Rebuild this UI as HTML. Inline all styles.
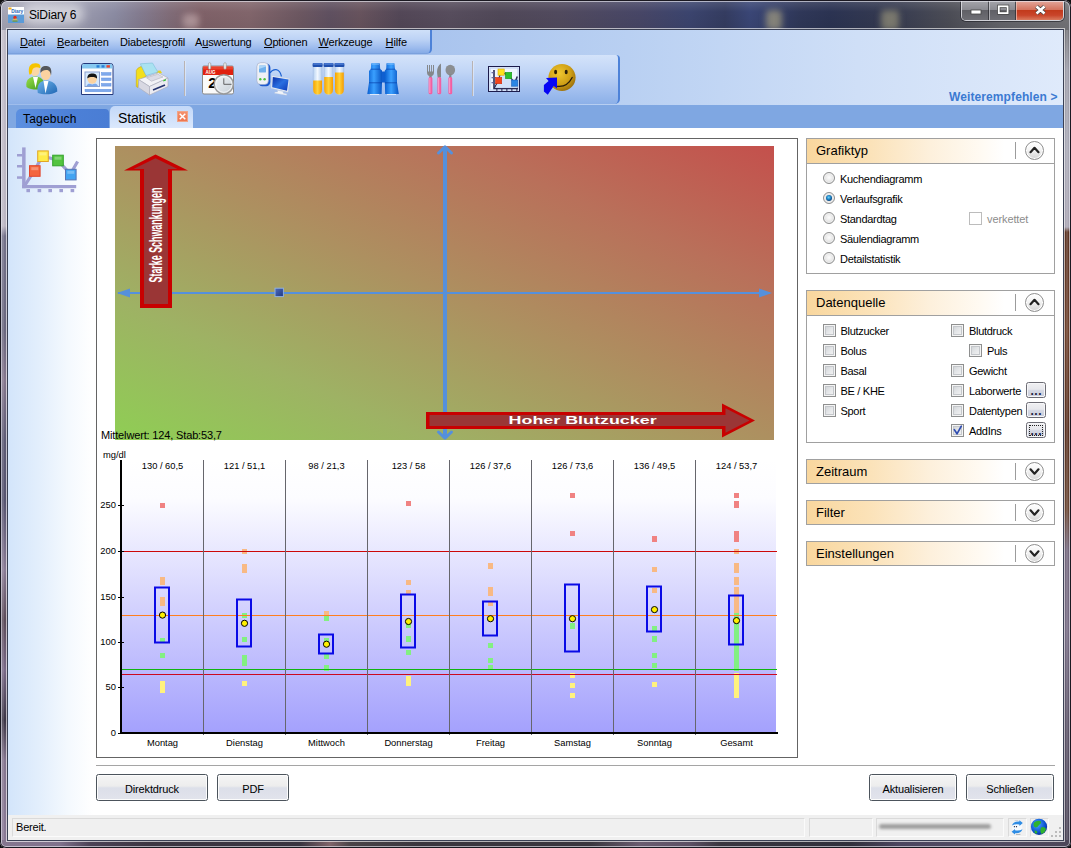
<!DOCTYPE html>
<html><head><meta charset="utf-8"><title>SiDiary 6</title>
<style>
html,body{margin:0;padding:0}
body{width:1071px;height:848px;position:relative;overflow:hidden;background:#111;font-family:"Liberation Sans",sans-serif;font-size:11px;color:#000;line-height:1}
div,span,u{position:absolute;box-sizing:border-box;white-space:nowrap}
u{position:static;text-decoration:underline}
svg{position:absolute;left:0;top:0;overflow:visible}
#win{left:0;top:0;width:1071px;height:848px;border-radius:7px 7px 6px 6px;overflow:hidden;background:#6c6078}
#title{left:0;top:0;width:1071px;height:30px;
 background:
 linear-gradient(to bottom,rgba(255,255,255,.16) 0,rgba(255,255,255,.10) 3px,rgba(255,255,255,0) 12px,rgba(0,0,0,.05) 28px),
 linear-gradient(to right,#a4a4b4 0,#a8a8b9 40px,#9a9aae 85px,#8b8ba2 115px,#837b8f 140px,#806c78 170px,#7f6168 200px,#81656b 250px,#6c5761 300px,#5f5060 330px,#67535d 360px,#534757 400px,#574d5d 450px,#504858 500px,#514a5e 560px,#474666 640px,#3b446e 690px,#343c60 725px,#3a4676 750px,#2f3758 800px,#2b3352 830px,#353a50 890px,#4c4d56 950px,#64646a 1000px,#747478 1071px)}
#tglow{left:22px;top:4px;width:62px;height:20px;border-radius:10px;background:rgba(255,255,255,.5);filter:blur(5px)}
#title i{position:absolute;display:block;filter:blur(3px);border-radius:4px}
#ttext{left:29px;top:9px;font-size:12px;color:#000;letter-spacing:-.15px}
#ticon{left:8px;top:7px;width:16px;height:16px;background:linear-gradient(#fff 0,#fff 45%,#5b9bd8 45%,#4a88c8 100%)}
.fl{left:0;top:30px;width:8px;height:810px;
 background:linear-gradient(to bottom,#c0bcc8 0,#bbb6c3 196px,#74728a 206px,#6a6880 300px,#86788e 350px,#5e5c76 410px,#565470 470px,#8a7c96 540px,#5c4c5a 590px,#7a6a88 640px,#3c3646 690px,#85768f 730px,#8a7a96 810px)}
.fr{left:1063px;top:30px;width:8px;height:810px;
 background:linear-gradient(to bottom,#77777c 0,#9c9ca8 40px,#a9a9b6 120px,#aaa6b4 197px,#5c3424 202px,#6e402c 300px,#5a3222 400px,#6a4634 480px,#74687e 520px,#766c84 600px,#5c5468 700px,#4c4658 810px)}
.fb{left:0;top:840px;width:1071px;height:8px;
 background:linear-gradient(to right,#85768f 0,#80728c 60px,#4c4256 90px,#3c3642 150px,#3a3440 300px,#80646a 330px,#4a4448 350px,#3a363e 420px,#3a363e 590px,#6a5c70 640px,#5c5064 690px,#3a3640 720px,#30303c 850px,#4c4660 900px,#524c62 1000px,#4c4658 1071px)}
.fhl{left:2px;top:30px;width:2px;height:810px;background:rgba(255,255,255,.14)}
#edge{left:0;top:0;width:1071px;height:848px;border-radius:7px 7px 6px 6px;box-shadow:inset 0 0 0 1px rgba(18,16,24,.95),inset 0 0 0 2px rgba(236,236,244,.62)}
#inl{left:6px;top:28px;width:1059px;height:814px;border:1px solid rgba(255,255,255,.62)}
#ind{left:7px;top:29px;width:1057px;height:812px;border:1px solid #3a4054}
/* caption buttons */
#capb{left:961px;top:1px;width:103px;height:20px;border:1px solid rgba(230,230,236,.85);border-top:none;border-radius:0 0 5px 5px;overflow:hidden;box-shadow:0 0 0 1px rgba(30,30,36,.6)}
#capb div{top:0;height:19px}
.cmin{left:0;width:27px;background:linear-gradient(#a4a4aa 0,#8b8b92 45%,#606066 50%,#6e6e74 100%);border-right:1px solid rgba(40,40,46,.7)}
.cmax{left:27px;width:27px;background:linear-gradient(#a4a4aa 0,#8b8b92 45%,#606066 50%,#6e6e74 100%);border-left:1px solid rgba(220,220,226,.6);border-right:1px solid rgba(40,40,46,.7)}
.ccls{left:54px;width:47px;background:linear-gradient(#e3a79b 0,#d4745f 45%,#c23a1c 50%,#c9452a 75%,#d97a5e 100%);border-left:1px solid rgba(240,200,190,.7)}
/* client */
#client{left:8px;top:29px;width:1055px;height:811px;background:#fff;overflow:hidden}
#ctop{left:0;top:0;width:1055px;height:1px;background:#3a4054}
#bars{left:0;top:1px;width:1055px;height:75px;background:linear-gradient(to right,#9fbdec 0,#a9c4ee 420px,#b9d0f2 620px,#cfdff7 850px,#dfeafb 1055px)}
#menu{left:0;top:1px;width:424px;height:24px;border-right:2px solid #4d82d8;border-bottom:1px solid #7ba1dd;border-radius:0 0 5px 0;background:linear-gradient(#cfe0f9 0,#bdd3f5 40%,#9fbdee 75%,#86abe6 100%)}
#menu span{top:7px;font-size:11px;letter-spacing:-.15px}
#tool{left:0;top:26px;width:612px;height:49px;border-right:2px solid #4d82d8;border-radius:0 4px 5px 0;background:linear-gradient(#d4e3fa 0,#c0d5f6 35%,#a3c0ef 70%,#8cb0e8 100%)}
.tsep{top:6px;width:2px;height:35px;background:linear-gradient(to right,#b9b3b3 0,#b9b3b3 1px,rgba(225,235,250,.7) 1px)}
#tabs{left:0;top:76px;width:1055px;height:23px;background:#7fa7e2}
#tab1{left:8px;top:4px;width:93px;height:19px;border-radius:5px 4px 0 0;background:linear-gradient(to right,#5b8fe0 0,#4c80d7 60%,#4a7dd4 100%)}
#tab2{left:102px;top:1px;width:83px;height:22px;border-radius:5px 5px 0 0;background:linear-gradient(#c3d8f8 0,#cfe0fa 50%,#dbe8fc 100%)}
#tab1 span{left:7px;top:4px;font-size:12px;letter-spacing:.2px}
#tab2 span{left:8px;top:5px;font-size:14px;letter-spacing:-.15px}
#tabx{left:67px;top:5px;width:11px;height:11px;background:linear-gradient(#f4906c,#ee7650);border:1px solid #f0a488}
#main{left:0;top:99px;width:1055px;height:687px;background:linear-gradient(to right,#d3e5fb 0,#e2eefc 30px,#f4f9fe 60px,#fff 85px)}
#status{left:0;top:786px;width:1055px;height:25px;background:#f0f0f0}
.sp{top:3px;height:19px;border:1px solid #dadada;border-right-color:#fbfbfb;border-bottom-color:#fbfbfb;background:#f0f0f0}
/* chart panel */
#panel{left:88px;top:109px;width:702px;height:620px;border:1px solid #646464;background:#fff}
#plot{left:107px;top:117px;width:659px;height:294px;background:linear-gradient(to top right,#8fce54 0%,#9eb264 24%,#ad9060 50%,#b9705a 76%,#c4504c 100%)}
#mw{left:93px;top:401px;font-size:11px;letter-spacing:-.15px}
/* right panels */
.gp{left:798px;width:249px;border:1px solid #a0a0a0;background:#fff}
.gh{left:0;top:0;width:247px;height:25px;background:linear-gradient(to right,#f9d79e 0,#fbe2b8 25%,#fdf0dc 50%,#fffaf2 70%,#fff 80%)}
.gh.open{border-bottom:1px solid #a0a0a0}
.gh.cl{height:23px}
.gh span{left:9px;top:5px;font-size:13px}
.gsep{left:208px;top:3px;width:1px;height:17px;background:#9c9c9c}
.gbtn{left:218px;top:2px;width:19px;height:19px;border-radius:50%;border:1px solid #8f8f8f;background:linear-gradient(#fff 0,#f4f4f4 45%,#d2d2d2 100%);box-shadow:inset 0 0 0 1px #fff}
.rad{width:12px;height:12px;border-radius:50%;border:1px solid #8e8f8f;background:radial-gradient(circle at 50% 45%,#fdfdfd 0,#e6e6e6 55%,#c9c9c9 100%);box-shadow:inset 0 0 0 1px #f2f2f2}
.rad.on:after{content:"";position:absolute;left:2px;top:2px;width:6px;height:6px;border-radius:50%;background:radial-gradient(circle at 45% 40%,#74d2f4 0,#2590d0 35%,#0b4a86 68%,#072e5c 100%)}
.chk{width:13px;height:13px;border:1px solid #8e8f8f;background:linear-gradient(135deg,#c9ccd0 0,#e4e6e8 50%,#f6f6f6 100%);box-shadow:inset 0 0 0 1px #f4f4f4, inset 0 0 0 2px #c4c7cb}
.chk.dis{border-color:#bcbcbc;background:#fff;box-shadow:none}
.lb{font-size:11px;letter-spacing:-.3px}
.lb.dis{color:#8c8c8c}
.sb{width:20px;height:16px;border:1px solid #6c6c74;border-radius:2.5px;background:linear-gradient(#f0f0f2 0,#e6e7ec 45%,#d6d9e4 52%,#c6cbda 100%);box-shadow:inset 0 0 0 1px #f6f6f8}
.sb span{left:3.5px;top:2px;font-size:12px;letter-spacing:.5px;font-weight:bold;color:#1c1c3c}
.sb i{position:absolute;left:2px;top:2px;right:2px;bottom:1px;border:1px dotted #222}
/* buttons */
.btn{top:745px;height:27px;border:1px solid #4c545c;border-radius:2.5px;letter-spacing:-.15px;background:linear-gradient(#f5f5f5 0,#ededed 44%,#dcdfe9 52%,#e2e4ec 100%);box-shadow:inset 0 0 0 1px #fcfcfc;text-align:center;font-size:11px;line-height:28px}
#smear{left:871px;top:9px;width:112px;height:5px;border-radius:3px;background:#8f8f8f;filter:blur(1.6px);opacity:.85}
#hr{left:88px;top:736px;width:959px;height:1px;background:#a5a5a5}
</style></head><body>
<div id="win">
<div id="title"><i style="left:766px;top:10px;width:16px;height:20px;background:rgba(196,186,136,.55)"></i><i style="left:881px;top:10px;width:18px;height:20px;background:rgba(190,182,140,.5)"></i><i style="left:183px;top:14px;width:16px;height:14px;background:rgba(225,200,200,.45)"></i><div id="tglow"></div><div id="ttext">SiDiary 6</div>
<div id="capb"><div class="cmin"></div><div class="cmax"></div><div class="ccls"></div></div>
</div>
<div class="fl"></div><div class="fr"></div><div class="fb"></div><div class="fhl"></div><div class="fhl" style="left:1066px"></div><div id="inl"></div><div id="ind"></div>
<div id="client">
<div id="ctop"></div><div id="bars"></div>
<div id="menu"><span style="left:12.0px"><u>D</u>atei</span><span style="left:49.0px"><u>B</u>earbeiten</span><span style="left:112px">Diabetes<u>p</u>rofil</span><span style="left:187px">A<u>u</u>swertung</span><span style="left:256.0px"><u>O</u>ptionen</span><span style="left:310.4px"><u>W</u>erkzeuge</span><span style="left:377.6px"><u>H</u>ilfe</span></div>
<div id="tool"><div class="tsep" style="left:176px"></div><div class="tsep" style="left:464px"></div></div>
<div id="wlink" style="left:941px;top:62px;font-size:12px;font-weight:bold;color:#3b7ad2;letter-spacing:.1px">Weiterempfehlen &gt;</div>
<div id="tabs"><div id="tab1"><span>Tagebuch</span></div><div id="tab2"><span>Statistik</span><div id="tabx"></div></div></div>
<div id="main"></div>
<div id="panel"></div><div id="plot"></div><div id="mw">Mittelwert: 124, Stab:53,7</div>
<div class="gp" style="top:109px;height:136px"><div class="gh open"><span>Grafiktyp</span><div class="gsep"></div><div class="gbtn"></div></div><div class="rad" style="left:16px;top:33px"></div><span class="lb" style="left:33px;top:35px">Kuchendiagramm</span><div class="rad on" style="left:16px;top:53px"></div><span class="lb" style="left:33px;top:55px">Verlaufsgrafik</span><div class="rad" style="left:16px;top:73px"></div><span class="lb" style="left:33px;top:75px">Standardtag</span><div class="rad" style="left:16px;top:93px"></div><span class="lb" style="left:33px;top:95px">Säulendiagramm</span><div class="rad" style="left:16px;top:113px"></div><span class="lb" style="left:33px;top:115px">Detailstatistik</span><div class="chk dis" style="left:162px;top:73px"></div><span class="lb dis" style="left:180px;top:75px;letter-spacing:-.1px">verkettet</span></div>
<div class="gp" style="top:261px;height:153px"><div class="gh open"><span>Datenquelle</span><div class="gsep"></div><div class="gbtn"></div></div><div class="chk" style="left:16px;top:33px"></div><span class="lb" style="left:33.5px;top:35px">Blutzucker</span><div class="chk" style="left:16px;top:53px"></div><span class="lb" style="left:33.5px;top:55px">Bolus</span><div class="chk" style="left:16px;top:73px"></div><span class="lb" style="left:33.5px;top:75px">Basal</span><div class="chk" style="left:16px;top:93px"></div><span class="lb" style="left:33.5px;top:95px">BE / KHE</span><div class="chk" style="left:16px;top:113px"></div><span class="lb" style="left:33.5px;top:115px">Sport</span><div class="chk" style="left:144px;top:33px"></div><span class="lb" style="left:162px;top:35px">Blutdruck</span><div class="chk" style="left:162px;top:53px"></div><span class="lb" style="left:180px;top:55px">Puls</span><div class="chk" style="left:144px;top:73px"></div><span class="lb" style="left:162px;top:75px">Gewicht</span><div class="chk" style="left:144px;top:93px"></div><span class="lb" style="left:162px;top:95px">Laborwerte</span><div class="sb" style="left:219px;top:91px"><span>...</span></div><div class="chk" style="left:144px;top:113px"></div><span class="lb" style="left:162px;top:115px">Datentypen</span><div class="sb" style="left:219px;top:111px"><span>...</span></div><div class="chk" style="left:144px;top:133px"></div><span class="lb" style="left:162px;top:135px">AddIns</span><div class="sb" style="left:219px;top:131px"><span>...</span><i></i></div></div>
<div class="gp" style="top:430px;height:25px"><div class="gh cl"><span>Zeitraum</span><div class="gsep"></div><div class="gbtn"></div></div></div>
<div class="gp" style="top:471px;height:25px"><div class="gh cl"><span>Filter</span><div class="gsep"></div><div class="gbtn"></div></div></div>
<div class="gp" style="top:512px;height:25px"><div class="gh cl"><span>Einstellungen</span><div class="gsep"></div><div class="gbtn"></div></div></div>
<div id="hr"></div>
<div class="btn" style="left:88px;width:112px">Direktdruck</div><div class="btn" style="left:209px;width:72px">PDF</div><div class="btn" style="left:861px;width:88px">Aktualisieren</div><div class="btn" style="left:958px;width:88px">Schließen</div>
<div id="status"><div class="sp" style="left:4px;width:793px"></div><div class="sp" style="left:801px;width:64px"></div><div class="sp" style="left:868px;width:128px"></div><div class="sp" style="left:1000px;width:19px"></div><div class="sp" style="left:1022px;width:19px"></div><span style="left:8px;top:7px;font-size:11px;letter-spacing:-.2px">Bereit.</span><div id="smear"></div></div>
</div>
<svg width="1071" height="848" viewBox="0 0 1071 848" font-family="Liberation Sans, sans-serif">
<defs><linearGradient id="bg" x1="0" y1="0" x2="0" y2="1"><stop offset="0" stop-color="#fff"/><stop offset=".14" stop-color="#fcfcff"/><stop offset="1" stop-color="#a4a1fd"/></linearGradient><linearGradient id="mk" x1="0" y1="0" x2="1" y2="1"><stop offset="0" stop-color="#4c6cc0"/><stop offset="1" stop-color="#203880"/></linearGradient></defs>
<rect x="122" y="460" width="654" height="272" fill="url(#bg)" shape-rendering="crispEdges"/>
<rect x="160" y="502.5" width="5" height="5.0" fill="#f08282" shape-rendering="crispEdges"/>
<rect x="160" y="577.0" width="5" height="7.5" fill="#f8b984" shape-rendering="crispEdges"/>
<rect x="160" y="597.0" width="5" height="9.0" fill="#f8b984" shape-rendering="crispEdges"/>
<rect x="160" y="638.0" width="5" height="5.0" fill="#82f082" shape-rendering="crispEdges"/>
<rect x="160" y="653.0" width="5" height="5.0" fill="#82f082" shape-rendering="crispEdges"/>
<rect x="160" y="681.0" width="5" height="11.5" fill="#fff27e" shape-rendering="crispEdges"/>
<rect x="242" y="549.0" width="5" height="5.0" fill="#f8b984" shape-rendering="crispEdges"/>
<rect x="242" y="564.0" width="5" height="9.0" fill="#f8b984" shape-rendering="crispEdges"/>
<rect x="242" y="613.0" width="5" height="5.0" fill="#82f082" shape-rendering="crispEdges"/>
<rect x="242" y="637.0" width="5" height="5.0" fill="#82f082" shape-rendering="crispEdges"/>
<rect x="242" y="655.0" width="5" height="11.0" fill="#82f082" shape-rendering="crispEdges"/>
<rect x="242" y="681.0" width="5" height="5.0" fill="#fff27e" shape-rendering="crispEdges"/>
<rect x="324" y="611.0" width="5" height="4.0" fill="#f8b984" shape-rendering="crispEdges"/>
<rect x="324" y="615.0" width="5" height="6.0" fill="#82f082" shape-rendering="crispEdges"/>
<rect x="324" y="638.0" width="5" height="8.0" fill="#82f082" shape-rendering="crispEdges"/>
<rect x="324" y="654.0" width="5" height="5.0" fill="#82f082" shape-rendering="crispEdges"/>
<rect x="324" y="665.0" width="5" height="6.0" fill="#82f082" shape-rendering="crispEdges"/>
<rect x="406" y="500.5" width="5" height="5.0" fill="#f08282" shape-rendering="crispEdges"/>
<rect x="406" y="580.0" width="5" height="4.5" fill="#f8b984" shape-rendering="crispEdges"/>
<rect x="406" y="590.0" width="5" height="4.0" fill="#f8b984" shape-rendering="crispEdges"/>
<rect x="406" y="623.0" width="5" height="5.0" fill="#82f082" shape-rendering="crispEdges"/>
<rect x="406" y="635.5" width="5" height="6.5" fill="#82f082" shape-rendering="crispEdges"/>
<rect x="406" y="650.0" width="5" height="4.5" fill="#82f082" shape-rendering="crispEdges"/>
<rect x="406" y="675.5" width="5" height="10.5" fill="#fff27e" shape-rendering="crispEdges"/>
<rect x="488" y="563.0" width="5" height="6.0" fill="#f8b984" shape-rendering="crispEdges"/>
<rect x="488" y="587.0" width="5" height="9.0" fill="#f8b984" shape-rendering="crispEdges"/>
<rect x="488" y="602.0" width="5" height="4.0" fill="#f8b984" shape-rendering="crispEdges"/>
<rect x="488" y="643.0" width="5" height="4.5" fill="#82f082" shape-rendering="crispEdges"/>
<rect x="488" y="658.0" width="5" height="4.5" fill="#82f082" shape-rendering="crispEdges"/>
<rect x="488" y="665.0" width="5" height="5.0" fill="#82f082" shape-rendering="crispEdges"/>
<rect x="570" y="493.0" width="5" height="5.0" fill="#f08282" shape-rendering="crispEdges"/>
<rect x="570" y="531.0" width="5" height="5.0" fill="#f08282" shape-rendering="crispEdges"/>
<rect x="570" y="623.0" width="5" height="6.0" fill="#82f082" shape-rendering="crispEdges"/>
<rect x="570" y="673.0" width="5" height="5.0" fill="#fff27e" shape-rendering="crispEdges"/>
<rect x="570" y="683.0" width="5" height="5.0" fill="#fff27e" shape-rendering="crispEdges"/>
<rect x="570" y="693.0" width="5" height="5.0" fill="#fff27e" shape-rendering="crispEdges"/>
<rect x="652" y="536.0" width="5" height="6.0" fill="#f08282" shape-rendering="crispEdges"/>
<rect x="652" y="567.0" width="5" height="5.0" fill="#f8b984" shape-rendering="crispEdges"/>
<rect x="652" y="588.0" width="5" height="5.0" fill="#f8b984" shape-rendering="crispEdges"/>
<rect x="652" y="626.0" width="5" height="5.0" fill="#82f082" shape-rendering="crispEdges"/>
<rect x="652" y="636.0" width="5" height="6.0" fill="#82f082" shape-rendering="crispEdges"/>
<rect x="652" y="653.0" width="5" height="5.0" fill="#82f082" shape-rendering="crispEdges"/>
<rect x="652" y="662.5" width="5" height="5.0" fill="#82f082" shape-rendering="crispEdges"/>
<rect x="652" y="682.0" width="5" height="5.0" fill="#fff27e" shape-rendering="crispEdges"/>
<rect x="734" y="493.0" width="5" height="5.0" fill="#f08282" shape-rendering="crispEdges"/>
<rect x="734" y="501.0" width="5" height="6.5" fill="#f08282" shape-rendering="crispEdges"/>
<rect x="734" y="531.0" width="5" height="11.0" fill="#f08282" shape-rendering="crispEdges"/>
<rect x="734" y="549.0" width="5" height="5.0" fill="#f8b984" shape-rendering="crispEdges"/>
<rect x="734" y="563.0" width="5" height="9.5" fill="#f8b984" shape-rendering="crispEdges"/>
<rect x="734" y="577.0" width="5" height="8.0" fill="#f8b984" shape-rendering="crispEdges"/>
<rect x="734" y="587.0" width="5" height="25.5" fill="#f8b984" shape-rendering="crispEdges"/>
<rect x="734" y="612.5" width="5" height="58.5" fill="#82f082" shape-rendering="crispEdges"/>
<rect x="734" y="672.5" width="5" height="25.5" fill="#fff27e" shape-rendering="crispEdges"/>
<rect x="122" y="551" width="655" height="1" fill="#cc0808" shape-rendering="crispEdges"/>
<rect x="122" y="615" width="655" height="1" fill="#ff7f1e" shape-rendering="crispEdges"/>
<rect x="122" y="669" width="655" height="1" fill="#10b410" shape-rendering="crispEdges"/>
<rect x="122" y="674" width="655" height="1" fill="#cc0820" shape-rendering="crispEdges"/>
<rect x="203" y="460" width="1" height="275" fill="#66666c" shape-rendering="crispEdges"/>
<rect x="285" y="460" width="1" height="275" fill="#66666c" shape-rendering="crispEdges"/>
<rect x="367" y="460" width="1" height="275" fill="#66666c" shape-rendering="crispEdges"/>
<rect x="449" y="460" width="1" height="275" fill="#66666c" shape-rendering="crispEdges"/>
<rect x="531" y="460" width="1" height="275" fill="#66666c" shape-rendering="crispEdges"/>
<rect x="613" y="460" width="1" height="275" fill="#66666c" shape-rendering="crispEdges"/>
<rect x="695" y="460" width="1" height="275" fill="#66666c" shape-rendering="crispEdges"/>
<rect x="120" y="460" width="2" height="274" fill="#000" shape-rendering="crispEdges"/>
<rect x="120" y="732" width="658" height="2" fill="#000" shape-rendering="crispEdges"/>
<rect x="118" y="733" width="6" height="1" fill="#000" shape-rendering="crispEdges"/>
<text x="116" y="736" font-size="9.4" text-anchor="end">0</text>
<rect x="118" y="687" width="6" height="1" fill="#000" shape-rendering="crispEdges"/>
<text x="116" y="690" font-size="9.4" text-anchor="end">50</text>
<rect x="118" y="642" width="6" height="1" fill="#000" shape-rendering="crispEdges"/>
<text x="116" y="645" font-size="9.4" text-anchor="end">100</text>
<rect x="118" y="597" width="6" height="1" fill="#000" shape-rendering="crispEdges"/>
<text x="116" y="600" font-size="9.4" text-anchor="end">150</text>
<rect x="118" y="551" width="6" height="1" fill="#000" shape-rendering="crispEdges"/>
<text x="116" y="554" font-size="9.4" text-anchor="end">200</text>
<rect x="118" y="505" width="6" height="1" fill="#000" shape-rendering="crispEdges"/>
<text x="116" y="508" font-size="9.4" text-anchor="end">250</text>
<text x="103" y="457.6" font-size="9.33">mg/dl</text>
<rect x="155" y="587.5" width="14" height="55.0" fill="none" stroke="#0a0ae6" stroke-width="2"/>
<circle cx="162.5" cy="615.1" r="3.1" fill="#fff000" stroke="#000" stroke-width="1"/>
<text x="162.5" y="469" font-size="9.33" text-anchor="middle">130 / 60,5</text>
<text x="162.5" y="746" font-size="9.33" text-anchor="middle">Montag</text>
<rect x="237" y="599.5" width="14" height="47.0" fill="none" stroke="#0a0ae6" stroke-width="2"/>
<circle cx="244.5" cy="623.3" r="3.1" fill="#fff000" stroke="#000" stroke-width="1"/>
<text x="244.5" y="469" font-size="9.33" text-anchor="middle">121 / 51,1</text>
<text x="244.5" y="746" font-size="9.33" text-anchor="middle">Dienstag</text>
<rect x="319" y="634.5" width="14" height="19.0" fill="none" stroke="#0a0ae6" stroke-width="2"/>
<circle cx="326.5" cy="644.2" r="3.1" fill="#fff000" stroke="#000" stroke-width="1"/>
<text x="326.5" y="469" font-size="9.33" text-anchor="middle">98 / 21,3</text>
<text x="326.5" y="746" font-size="9.33" text-anchor="middle">Mittwoch</text>
<rect x="401" y="594.5" width="14" height="53.0" fill="none" stroke="#0a0ae6" stroke-width="2"/>
<circle cx="408.5" cy="621.5" r="3.1" fill="#fff000" stroke="#000" stroke-width="1"/>
<text x="408.5" y="469" font-size="9.33" text-anchor="middle">123 / 58</text>
<text x="408.5" y="746" font-size="9.33" text-anchor="middle">Donnerstag</text>
<rect x="483" y="601.5" width="14" height="34.0" fill="none" stroke="#0a0ae6" stroke-width="2"/>
<circle cx="490.5" cy="618.7" r="3.1" fill="#fff000" stroke="#000" stroke-width="1"/>
<text x="490.5" y="469" font-size="9.33" text-anchor="middle">126 / 37,6</text>
<text x="490.5" y="746" font-size="9.33" text-anchor="middle">Freitag</text>
<rect x="565" y="584.5" width="14" height="67.0" fill="none" stroke="#0a0ae6" stroke-width="2"/>
<circle cx="572.5" cy="618.7" r="3.1" fill="#fff000" stroke="#000" stroke-width="1"/>
<text x="572.5" y="469" font-size="9.33" text-anchor="middle">126 / 73,6</text>
<text x="572.5" y="746" font-size="9.33" text-anchor="middle">Samstag</text>
<rect x="647" y="586.5" width="14" height="45.0" fill="none" stroke="#0a0ae6" stroke-width="2"/>
<circle cx="654.5" cy="609.6" r="3.1" fill="#fff000" stroke="#000" stroke-width="1"/>
<text x="654.5" y="469" font-size="9.33" text-anchor="middle">136 / 49,5</text>
<text x="654.5" y="746" font-size="9.33" text-anchor="middle">Sonntag</text>
<rect x="729" y="595.5" width="14" height="49.0" fill="none" stroke="#0a0ae6" stroke-width="2"/>
<circle cx="736.5" cy="620.6" r="3.1" fill="#fff000" stroke="#000" stroke-width="1"/>
<text x="736.5" y="469" font-size="9.33" text-anchor="middle">124 / 53,7</text>
<text x="736.5" y="746" font-size="9.33" text-anchor="middle">Gesamt</text>
<rect x="443" y="148" width="4" height="290" fill="#5590dc"/>
<rect x="118" y="292" width="652" height="2" fill="#5590dc"/>
<path d="M438.5 153 L445 146.8 L451.5 153" fill="none" stroke="#5590dc" stroke-width="3" stroke-linecap="round" stroke-linejoin="round"/>
<path d="M438.5 432 L445 438.2 L451.5 432" fill="none" stroke="#5590dc" stroke-width="3" stroke-linecap="round" stroke-linejoin="round"/>
<path d="M117 293 L130 288.5 L130 297.5 Z" fill="#5590dc"/>
<path d="M772 293 L759 288.5 L759 297.5 Z" fill="#5590dc"/>
<rect x="275" y="288.2" width="8.4" height="8.4" fill="url(#mk)" stroke="#8fb0e0" stroke-width="1"/>
<path d="M155.5 154.5 L188 170.5 L172 170.5 L172 308 L140 308 L140 170.5 L124 170.5 Z" fill="#c80000"/>
<path d="M155.5 158.3 L177.5 169 L168 169 L168 304 L144 304 L144 169 L133.5 169 Z" fill="#9a3636"/>
<path d="M426 412 L722 412 L722 403.5 L755 420.5 L722 437.5 L722 429 L426 429 Z" fill="#c80000"/>
<path d="M429.5 415 L725.5 415 L725.5 408.3 L749.5 420.5 L725.5 432.7 L725.5 426 L429.5 426 Z" fill="#9a3636"/>
<text transform="translate(162,282.5) rotate(-90) scale(.468,1)" font-size="19" font-weight="bold" fill="#fff">Starke Schwankungen</text>
<text x="508.6" y="424" font-size="10" font-weight="bold" fill="#fff" textLength="148" lengthAdjust="spacingAndGlyphs">Hoher Blutzucker</text>
<defs>
<linearGradient id="gGreen" x1="0" y1="0" x2="1" y2="1"><stop offset="0" stop-color="#9be04a"/><stop offset="1" stop-color="#3f9a1c"/></linearGradient>
<linearGradient id="gBlueB" x1="0" y1="0" x2="1" y2="1"><stop offset="0" stop-color="#6fb4ea"/><stop offset="1" stop-color="#1f66b4"/></linearGradient>
<linearGradient id="gBino" x1="0" y1="0" x2="1" y2="0"><stop offset="0" stop-color="#0a5fd0"/><stop offset=".45" stop-color="#3aa0ff"/><stop offset="1" stop-color="#0a56c4"/></linearGradient>
<linearGradient id="gLiq" x1="0" y1="0" x2="1" y2="0"><stop offset="0" stop-color="#f7a400"/><stop offset=".5" stop-color="#ffd23c"/><stop offset="1" stop-color="#f59c00"/></linearGradient>
<linearGradient id="gGlass" x1="0" y1="0" x2="1" y2="0"><stop offset="0" stop-color="#b9d3f2"/><stop offset=".5" stop-color="#f2f8ff"/><stop offset="1" stop-color="#b4cdee"/></linearGradient>
<radialGradient id="gSmile" cx=".4" cy=".35" r=".7"><stop offset="0" stop-color="#efc730"/><stop offset=".6" stop-color="#cf9f16"/><stop offset="1" stop-color="#986c0a"/></radialGradient>
<linearGradient id="gMon" x1="0" y1="0" x2="1" y2="1"><stop offset="0" stop-color="#0b2fa8"/><stop offset=".5" stop-color="#2a6fe0"/><stop offset="1" stop-color="#0d3ab8"/></linearGradient>
<radialGradient id="gGlobe" cx=".4" cy=".35" r=".7"><stop offset="0" stop-color="#4aa8ff"/><stop offset=".7" stop-color="#0b4fd0"/><stop offset="1" stop-color="#062a8c"/></radialGradient>
<linearGradient id="gClock" x1="0" y1="0" x2="1" y2="1"><stop offset="0" stop-color="#f4f7f9"/><stop offset="1" stop-color="#c6ced6"/></linearGradient>
</defs>
<g>
<path d="M26.5 87 C25 80 30 76.5 35 76.5 C40 76.5 44 79 44 84 L43 89 C38 90 30 90 26.5 87Z" fill="url(#gGreen)"/>
<path d="M33 77 L35.5 88 L38 77Z" fill="#fff"/>
<ellipse cx="35" cy="70.5" rx="4.6" ry="5.6" fill="#fbd7a6"/>
<path d="M29.3 74.5 C27.5 66 31 63 36 63.3 C40 63.5 41 66 40.2 68.2 C37 66.5 33 67 32.2 70.5 C32 72.5 31.5 75 29.3 74.5Z" fill="#f6c400"/>
<path d="M37.8 93 C36 84 41 80.5 46 80.5 C52 80.5 57.5 84 57.3 91.5 C52 95 43 95 37.8 93Z" fill="url(#gBlueB)"/>
<path d="M43.5 81 L45.5 93.5 L48.5 81Z" fill="#fff"/>
<ellipse cx="45.8" cy="73.8" rx="5" ry="6.4" fill="#fbd2a0"/>
<path d="M40.6 73 C39.5 67.5 43 65.8 46.5 66 C50.5 66.2 52.2 69.5 51 75.5 C50.5 72.5 49.5 70.5 47.5 70 C44.5 69.5 42 70.5 40.6 73Z" fill="#55585c"/>
</g>
<g>
<path d="M81.5 94.5 L81.5 66 Q81.5 63.5 84 63.5 L110.5 63.5 Q113 63.5 113 66 L113 94.5Z" fill="#fdfdff" stroke="#24397c" stroke-width="1"/>
<path d="M82 68.5 L82 66 Q82 64 84 64 L110.5 64 Q112.5 64 112.5 66 L112.5 68.5Z" fill="#86c8f0"/>
<rect x="96.5" y="65.2" width="3" height="2.4" fill="#2a7fd8"/><rect x="101.5" y="65.2" width="3" height="2.4" fill="#2a7fd8"/><rect x="106.5" y="65.2" width="3.4" height="2.4" fill="#f0442c"/>
<rect x="85" y="72" width="14.5" height="14.5" fill="#d6e8fc" stroke="#8aa0cf" stroke-width="1"/>
<ellipse cx="92.2" cy="79.2" rx="4.6" ry="4.6" fill="#fbd2a0"/>
<path d="M87.4 78.6 C87 74.5 90 73.4 92.4 73.5 C95 73.5 97.6 74.6 97 78.8 C95.5 76.6 89.5 76.6 87.4 78.6Z" fill="#141414"/>
<path d="M86.5 86 C87.5 83.3 90 83.5 92.2 84.4 C94.5 83.5 97 83.3 98 86Z" fill="#7aa7ea"/>
<rect x="101.5" y="72.6" width="9.5" height="2.6" fill="#7fa9ec" stroke="#5f8fe0" stroke-width=".5"/>
<rect x="101.5" y="78.0" width="9.5" height="2.6" fill="#7fa9ec" stroke="#5f8fe0" stroke-width=".5"/>
<rect x="101.5" y="83.5" width="9.5" height="2.6" fill="#7fa9ec" stroke="#5f8fe0" stroke-width=".5"/>
<rect x="85" y="89.3" width="26" height="2.4" fill="#7fa9ec" stroke="#5f8fe0" stroke-width=".5"/>
</g>
<g>
<path d="M136.3 70.5 Q137 68 141.5 66.3 L146.5 76 L139 80.5 L137.5 87.5 L136.3 86.5Z" fill="#f3df1c" stroke="#c9a80c" stroke-width=".6"/>
<path d="M155.5 71 L160.5 70.5 L162 73 L157 74.5Z" fill="#e8d21c"/>
<path d="M140.3 63.8 L152.5 63 L157.8 72 L146 75.5Z" fill="#a9e2f1" stroke="#7cbfd8" stroke-width=".6"/>
<path d="M138.5 79.5 L158.5 72.8 L168 78 L149.5 86.5Z" fill="#f3f3f7" stroke="#a9a9b6" stroke-width=".6"/>
<path d="M146.5 77.8 L157.8 74.2 L163 77 L151.5 81.2Z" fill="#dcdce6" stroke="#a9a9b6" stroke-width=".5"/>
<path d="M138.5 79.5 L149.5 86.5 L149.5 95 L138.5 87.5Z" fill="#d8d8e2" stroke="#a9a9b6" stroke-width=".6"/>
<path d="M149.5 86.5 L168 78 L168 86.5 L149.5 95Z" fill="#ececf2" stroke="#a9a9b6" stroke-width=".6"/>
<path d="M153 90 L165 85" stroke="#26356f" stroke-width="1.7"/>
<path d="M163.3 80.2 L166 79 L166 80.4 L163.3 81.6Z" fill="#35c235"/>
</g>
<g>
<rect x="202.5" y="66" width="31" height="28" rx="1.5" fill="#fafafa" stroke="#8a8a8a" stroke-width="1"/>
<path d="M203 75 L203 67.5 Q203 66.5 204 66.5 L232 66.5 Q233 66.5 233 67.5 L233 75Z" fill="#e0200f"/>
<rect x="203" y="66.5" width="30" height="3" fill="#f0503c" opacity=".7"/>
<text x="205.6" y="74.3" font-size="5.6" font-weight="bold" fill="#fff" textLength="10" lengthAdjust="spacingAndGlyphs">AUG</text>
<rect x="208.4" y="62.8" width="2.4" height="6.4" rx="1" fill="#f2f2f2" stroke="#8a8a8a" stroke-width=".6"/><rect x="223.8" y="62.8" width="2.4" height="6.4" rx="1" fill="#f2f2f2" stroke="#8a8a8a" stroke-width=".6"/>
<text x="208.2" y="88.2" font-size="15" font-weight="bold" fill="#000">2</text>
<circle cx="223.8" cy="84.3" r="9.6" fill="url(#gClock)" stroke="#9a9a9a" stroke-width="1.5"/>
<circle cx="223.8" cy="84.3" r="8" fill="none" stroke="#fff" stroke-width=".8" opacity=".8"/>
<path d="M223.8 84.3 L223.8 78.3 M223.8 84.3 L231.5 84.3" stroke="#555" stroke-width=".9"/>
</g>
<g>
<path d="M270 73 C273 68.5 279.5 67.5 281.5 76.5" fill="none" stroke="#1e62d2" stroke-width="1.2"/>
<rect x="258.2" y="63.6" width="12.2" height="22.6" rx="4.2" fill="#1a58cf"/>
<rect x="256.8" y="62.6" width="11.6" height="22" rx="4" fill="#eef1f6" stroke="#9aa6c4" stroke-width=".6"/>
<rect x="259" y="65.4" width="7" height="7.2" rx="1.2" fill="#6fb0ec"/><path d="M259 69 L266 66.5 L266 65.4 L259 65.4Z" fill="#a9d4f8"/>
<circle cx="260.3" cy="79.3" r="1.2" fill="#4cc03c"/><circle cx="264.6" cy="79.3" r="1.2" fill="#4cc03c"/>
<path d="M271.6 75.6 L289.8 78.6 L288 92.3 L271 88.2Z" fill="#e8eef8" stroke="#b9c6dc" stroke-width=".5"/>
<path d="M272.8 77 L288.6 79.6 L287 90.8 L272.2 87.3Z" fill="url(#gMon)"/>
<path d="M277.5 90.2 L283.5 91.6 L283 93 L287 94 L286.5 95.2 L274.5 93.2 L275 92 L277.5 92Z" fill="#f2f5fa" stroke="#b9c6dc" stroke-width=".4"/>
</g>
<g>
<path d="M313.2 65 L313.2 89.5 Q313.2 94.5 317.6 94.5 Q322.0 94.5 322.0 89.5 L322.0 65Z" fill="url(#gGlass)" stroke="#9fb6dc" stroke-width=".5"/>
<path d="M313.2 80.5 L313.2 89.5 Q313.2 94.5 317.6 94.5 Q322.0 94.5 322.0 89.5 L322.0 80.5Z" fill="url(#gLiq)"/>
<rect x="312.6" y="63" width="10" height="4" rx="1" fill="#1f4fae"/>
<rect x="313.3" y="63.4" width="8.6" height="1.2" fill="#5a8ade"/>
<path d="M324.2 65 L324.2 89.5 Q324.2 94.5 328.6 94.5 Q333.0 94.5 333.0 89.5 L333.0 65Z" fill="url(#gGlass)" stroke="#9fb6dc" stroke-width=".5"/>
<path d="M324.2 77.0 L324.2 89.5 Q324.2 94.5 328.6 94.5 Q333.0 94.5 333.0 89.5 L333.0 77.0Z" fill="url(#gLiq)"/>
<rect x="323.6" y="63" width="10" height="4" rx="1" fill="#1f4fae"/>
<rect x="324.3" y="63.4" width="8.6" height="1.2" fill="#5a8ade"/>
<path d="M335.0 65 L335.0 89.5 Q335.0 94.5 339.4 94.5 Q343.8 94.5 343.8 89.5 L343.8 65Z" fill="url(#gGlass)" stroke="#9fb6dc" stroke-width=".5"/>
<path d="M335.0 72.6 L335.0 89.5 Q335.0 94.5 339.4 94.5 Q343.8 94.5 343.8 89.5 L343.8 72.6Z" fill="url(#gLiq)"/>
<rect x="334.4" y="63" width="10" height="4" rx="1" fill="#1f4fae"/>
<rect x="335.1" y="63.4" width="8.6" height="1.2" fill="#5a8ade"/>
</g>
<g fill="url(#gBino)">
<rect x="379.5" y="71.5" width="7.5" height="11" fill="#0f5fd0"/>
<path d="M371.3 63.3 L379.7 63.3 L380.2 69 L382 70.5 L382 82.5 L381.6 94 L367.3 94 L369 82.5 L369 71 L370.8 69Z"/>
<path d="M386.5 63.3 L394.4 63.3 L395 69 L397 71 L397 82.5 L398.8 94 L385.2 94 L384.8 82.5 L384.8 70.5 L386.2 69Z"/>
</g>
<path d="M369 82.8 L382 82.8 M384.8 82.8 L397 82.8 M370.8 69.2 L380.2 69.2 M386.2 69.2 L395 69.2" stroke="#083ea8" stroke-width=".9" opacity=".75"/>
<path d="M372 64.2 L379 64.2 M387.2 64.2 L393.8 64.2" stroke="#7cc0ff" stroke-width="1" opacity=".8"/>
<rect x="370" y="94" width="9" height="1" fill="#e4eefc" opacity=".9"/><rect x="387" y="94" width="9" height="1" fill="#e4eefc" opacity=".9"/>
<g>
<path d="M427 65 L427 72 Q427 75.5 429.3 76 L429.3 78 L431.7 78 L431.7 76 Q434 75.5 434 72 L434 65 L433 65 L433 71.5 L431.9 71.5 L431.9 65 L431 65 L431 71.5 L430 71.5 L430 65 L429 65 L429 71.5 L428 71.5 L428 65Z" fill="#84878a"/>
<rect x="428.6" y="77" width="3.8" height="17.2" rx="1.5" fill="#f25fa2"/><rect x="429.3" y="78" width="1.1" height="15" fill="#f9a0c8"/>
<path d="M441 63.5 Q437 66 437 72 L437.6 77.5 L441 77.5Z" fill="#84878a"/>
<rect x="437.4" y="77" width="3.8" height="17.2" rx="1.5" fill="#f25fa2"/><rect x="438.1" y="78" width="1.1" height="15" fill="#f9a0c8"/>
<ellipse cx="450.3" cy="70" rx="4.8" ry="5.3" fill="#8b8e91"/><rect x="449.2" y="74" width="2.2" height="4" fill="#84878a"/>
<rect x="448.4" y="77" width="3.8" height="17.2" rx="1.5" fill="#f25fa2"/><rect x="449.1" y="78" width="1.1" height="15" fill="#f9a0c8"/>
</g>
<g>
<rect x="488.5" y="66.5" width="31" height="25" fill="#eef4ff" stroke="#1c1c4c" stroke-width="1"/>
<rect x="490" y="68" width="28" height="22" fill="none" stroke="#b9cdf2" stroke-width="1"/>
<path d="M494 70 L494 88.5 L518 88.5" fill="none" stroke="#2c2c54" stroke-width="1.6"/>
<path d="M494.5 88 L498.5 80.5 L501 72 L508.5 75.3 L514.7 83 L517.3 76.5" fill="none" stroke="#2c2c54" stroke-width="1.5"/>
<path d="M495 88 L498.5 81 L501 73 L508.5 76 L514.7 83.5 L517.3 88Z" fill="#c9dcf8" opacity=".8"/>
<rect x="498" y="69" width="6.2" height="6.2" fill="#ffe11c" stroke="#d8a800" stroke-width=".6"/>
<rect x="505.5" y="72.4" width="6.2" height="6.2" fill="#2cc02c" stroke="#149414" stroke-width=".6"/>
<rect x="495.5" y="77.5" width="6.2" height="6.2" fill="#f4441c" stroke="#d02c0c" stroke-width=".6"/>
<rect x="511.6" y="80" width="6.2" height="6.2" fill="#2c86e4" stroke="#1c5cb4" stroke-width=".6"/>
<rect x="496" y="89.3" width="1.6" height="1.3" fill="#2c2c54"/>
<rect x="501" y="89.3" width="1.6" height="1.3" fill="#2c2c54"/>
<rect x="506" y="89.3" width="1.6" height="1.3" fill="#2c2c54"/>
<rect x="511" y="89.3" width="1.6" height="1.3" fill="#2c2c54"/>
<rect x="516" y="89.3" width="1.6" height="1.3" fill="#2c2c54"/>
<rect x="491.5" y="72" width="2" height="1.3" fill="#6c6ca4"/>
<rect x="491.5" y="77" width="2" height="1.3" fill="#6c6ca4"/>
<rect x="491.5" y="82" width="2" height="1.3" fill="#6c6ca4"/>
</g>
<g>
<circle cx="562" cy="77.5" r="13.6" fill="url(#gSmile)"/>
<ellipse cx="555.6" cy="72" rx="1.5" ry="2.3" fill="#2a1e08"/><ellipse cx="566.2" cy="72" rx="1.5" ry="2.3" fill="#2a1e08"/>
<path d="M557.5 86.3 Q567 87.5 572.2 77.5" fill="none" stroke="#2a1e08" stroke-width="1.3" stroke-linecap="round"/>
<path d="M546 78 L557 77.6 L557 88.6 L553.7 85.9 L547.8 94.7 L543.9 91.6 L543.9 85 L548.6 80.9Z" fill="#0606f4"/>
</g>
<g>
<path d="M24.5 186 L34.7 170 L42.5 156 L57.8 160.3 L70.4 174 L77.6 161.5" fill="none" stroke="#9f9fd3" stroke-width="3.2" stroke-linejoin="round"/>
<rect x="22.1" y="147.4" width="3.5" height="40.8" fill="#9f9fd3"/>
<rect x="22.1" y="185" width="54.1" height="3.2" fill="#9f9fd3"/>
<rect x="17" y="154.0" width="5.5" height="2.5" fill="#9f9fd3"/>
<rect x="17" y="165.0" width="5.5" height="2.5" fill="#9f9fd3"/>
<rect x="17" y="176.3" width="5.5" height="2.5" fill="#9f9fd3"/>
<rect x="26.4" y="189" width="3.6" height="3.2" fill="#9f9fd3"/>
<rect x="37.6" y="189" width="3.6" height="3.2" fill="#9f9fd3"/>
<rect x="48.4" y="189" width="3.6" height="3.2" fill="#9f9fd3"/>
<rect x="59.4" y="189" width="3.6" height="3.2" fill="#9f9fd3"/>
<rect x="70.6" y="189" width="3.6" height="3.2" fill="#9f9fd3"/>
<rect x="29.5" y="165.7" width="10.6" height="10.6" fill="#f4663f" stroke="#e2452c" stroke-width="1"/>
<rect x="31.3" y="167.2" width="7" height="3" fill="#fff" opacity=".28"/>
<rect x="37.7" y="150.9" width="10.6" height="10.6" fill="#ffec48" stroke="#e2a624" stroke-width="1"/>
<rect x="39.5" y="152.4" width="7" height="3" fill="#fff" opacity=".28"/>
<rect x="52.7" y="155.2" width="10.6" height="10.6" fill="#52c440" stroke="#34a42c" stroke-width="1"/>
<rect x="54.5" y="156.7" width="7" height="3" fill="#fff" opacity=".28"/>
<rect x="65.5" y="169.3" width="10.6" height="10.6" fill="#42a4f2" stroke="#5674b4" stroke-width="1"/>
<rect x="67.3" y="170.8" width="7" height="3" fill="#fff" opacity=".28"/>
</g>
<g>
<ellipse cx="1017.2" cy="827.4" rx="5" ry="6.6" fill="#f6fafe"/>
<path d="M1011.9 825.6 Q1013.6 821 1019.4 821.6 L1019.4 820.3 L1022.8 823 L1019.4 825.9 L1019.4 824.5 Q1015.2 823.7 1011.9 825.6Z" fill="#2e8ce4"/>
<path d="M1022.5 829.2 Q1020.8 833.8 1015 833.2 L1015 834.5 L1011.6 831.8 L1015 828.9 L1015 830.3 Q1019.2 831.1 1022.5 829.2Z" fill="#2e8ce4"/>
<circle cx="1014.4" cy="826.7" r=".65" fill="#1c2440"/><circle cx="1016.5" cy="826.7" r=".65" fill="#1c2440"/>
<rect x="1016" y="833.9" width="4.4" height="1" fill="#b4b4b4"/><rect x="1014.6" y="820.3" width="3.6" height=".8" fill="#c4c8cc"/>
<circle cx="1039" cy="826.8" r="8.1" fill="url(#gGlobe)"/>
<path d="M1034 822.5 Q1037 819.8 1040.5 821 Q1042 823 1039.5 824.5 Q1038 827 1035.5 827.5 Q1032.5 826 1034 822.5Z M1041 827.5 Q1044.5 826 1046 829 Q1045 833 1041.5 834 Q1039.5 831 1041 827.5Z M1034.5 830.5 Q1037 830 1037.5 832.5 Q1036.5 834.3 1034.8 833.3Z" fill="#2fb22f"/>
<rect x="1059" y="827" width="2" height="2" fill="#bcbcbc"/>
<rect x="1059" y="831" width="2" height="2" fill="#bcbcbc"/>
<rect x="1055" y="831" width="2" height="2" fill="#bcbcbc"/>
<rect x="1059" y="835" width="2" height="2" fill="#bcbcbc"/>
<rect x="1055" y="835" width="2" height="2" fill="#bcbcbc"/>
<rect x="1051" y="835" width="2" height="2" fill="#bcbcbc"/>
</g>
<g><rect x="8" y="7" width="16" height="16" fill="#5b9bd8"/><rect x="8" y="7" width="16" height="7.5" fill="#fff"/><text x="11.2" y="13.3" font-size="5.2" font-weight="bold" fill="#2c66b8" textLength="12" lengthAdjust="spacingAndGlyphs">Diary</text><rect x="8.5" y="7.5" width="3" height="2" fill="#f4b018"/><circle cx="15" cy="17.5" r="1.7" fill="#e22c1c"/><path d="M11.5 20.5 L18.5 20.5 L16 18.5 L13.5 19Z" fill="#d8b45c"/><rect x="12.5" y="20.5" width="5" height="1.2" fill="#6a9a3c"/></g>
<rect x="971" y="10" width="10" height="4" fill="#fff" stroke="#444" stroke-width=".8"/>
<rect x="998.8" y="6.3" width="8.8" height="6.8" fill="none" stroke="#444" stroke-width="3.2"/><rect x="998.8" y="6.3" width="8.8" height="6.8" fill="none" stroke="#fff" stroke-width="1.8"/>
<path d="M1036.5 6.5 L1044.5 13.5 M1044.5 6.5 L1036.5 13.5" stroke="#444" stroke-width="4.2"/><path d="M1036.5 6.5 L1044.5 13.5 M1044.5 6.5 L1036.5 13.5" stroke="#fff" stroke-width="2.6"/>
<path d="M179.7 113.7 L185.3 119.3 M185.3 113.7 L179.7 119.3" stroke="#fff" stroke-width="1.5"/>
<path d="M1030.5 152.2 L1034.5 147.8 L1038.5 152.2" fill="none" stroke="#222" stroke-width="2.2" stroke-linecap="round" stroke-linejoin="round"/>
<path d="M1030.5 304.2 L1034.5 299.8 L1038.5 304.2" fill="none" stroke="#222" stroke-width="2.2" stroke-linecap="round" stroke-linejoin="round"/>
<path d="M1030.5 469.3 L1034.5 473.7 L1038.5 469.3" fill="none" stroke="#222" stroke-width="2.2" stroke-linecap="round" stroke-linejoin="round"/>
<path d="M1030.5 510.3 L1034.5 514.7 L1038.5 510.3" fill="none" stroke="#222" stroke-width="2.2" stroke-linecap="round" stroke-linejoin="round"/>
<path d="M1030.5 551.3 L1034.5 555.7 L1038.5 551.3" fill="none" stroke="#222" stroke-width="2.2" stroke-linecap="round" stroke-linejoin="round"/>
<path d="M954.3 429.6 L957 433.8 L961.3 426.2" fill="none" stroke="#2f4cb0" stroke-width="1.7" stroke-linecap="round" stroke-linejoin="round"/>
</svg>
<div id="edge"></div></div>
</body></html>
